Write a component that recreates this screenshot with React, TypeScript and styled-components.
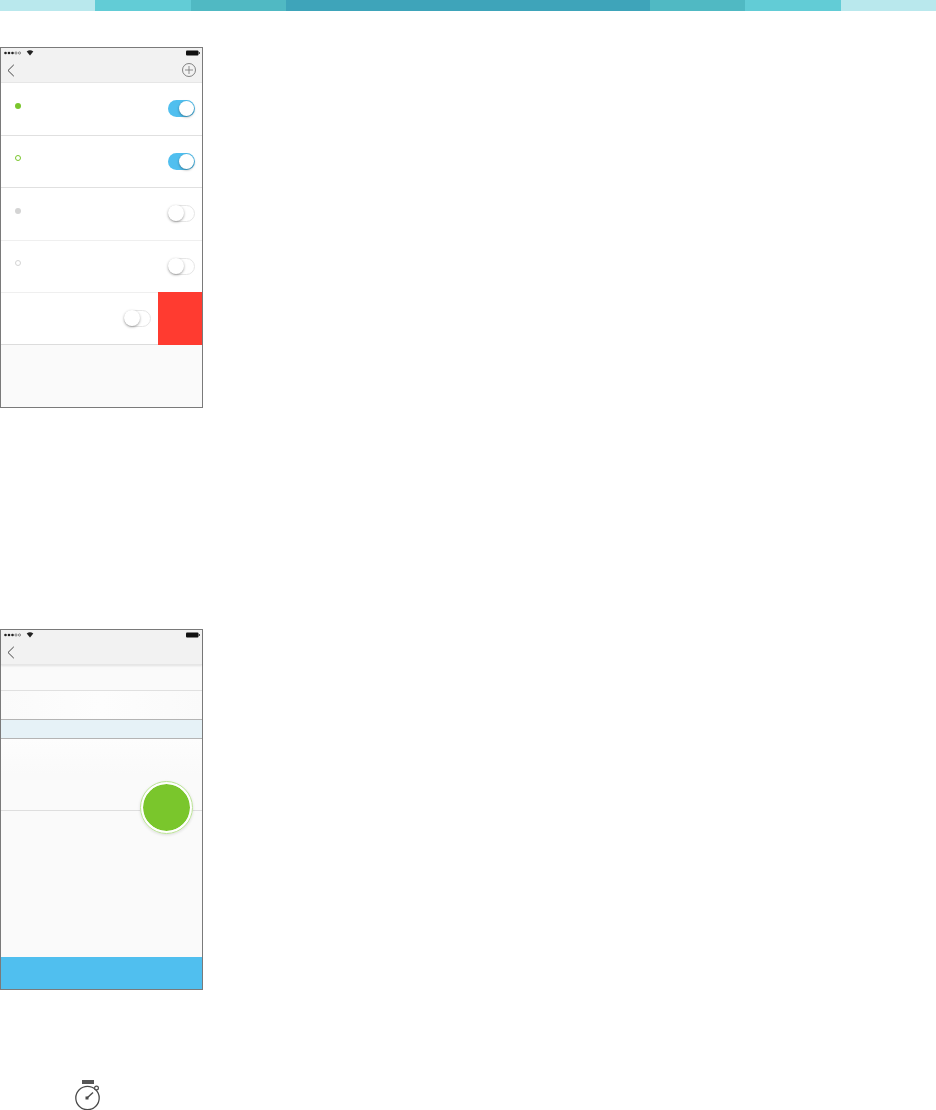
import { createGlobalStyle, styled } from "styled-components"

const GlobalStyle = createGlobalStyle`
  html, body {
    margin: 0;
    padding: 0;
    background: #fff;
    font-family: "Liberation Sans", Arial, sans-serif;
  }
  * {
    box-sizing: border-box;
  }
`

const stripes = [
  { width: 95, color: "#b9e8ed" },
  { width: 96, color: "#62ccd6" },
  { width: 95, color: "#50b9c3" },
  { width: 364, color: "#3ea4ba" },
  { width: 95, color: "#50b9c3" },
  { width: 96, color: "#62ccd6" },
  { width: 95, color: "#b9e8ed" },
]

const rows = [
  { hollow: false, color: "#7ac62c", on: true, line: "#e0e0e0" },
  { hollow: true, color: "#7ac62c", on: true, line: "#e0e0e0" },
  { hollow: false, color: "#d4d4d4", on: false, line: "#efefef" },
  { hollow: true, color: "#d4d4d4", on: false, line: "#efefef" },
]

const StatusIcons = () => (
  <StatusBar>
    <svg width="40" height="6" viewBox="0 0 40 6">
      <circle cx="5.5" cy="3" r="1.3" fill="#222" />
      <circle cx="9" cy="3" r="1.3" fill="#222" />
      <circle cx="12.5" cy="3" r="1.3" fill="#222" />
      <circle cx="16" cy="3" r="1.1" fill="none" stroke="#222" strokeWidth="0.5" />
      <circle cx="19.5" cy="3" r="1.1" fill="none" stroke="#222" strokeWidth="0.5" />
      <path d="M26.7 1.6a5.4 5.4 0 0 1 6.6 0L30 5.6z" fill="#222" />
    </svg>
    <svg width="14" height="6" viewBox="0 0 14 6">
      <rect x="0" y="0.5" width="12.5" height="5" rx="1" fill="#111" />
      <rect x="12.8" y="2" width="0.9" height="2" fill="#111" />
    </svg>
  </StatusBar>
)

const BackIcon = () => (
  <svg width="8" height="13" viewBox="0 0 8 13">
    <path d="M6.8 0.8 1 6.5l5.8 5.7" fill="none" stroke="#444" strokeWidth="1" />
  </svg>
)

const PlusIcon = () => (
  <svg width="14" height="14" viewBox="0 0 14 14">
    <circle cx="7" cy="7" r="6.5" fill="none" stroke="#666" strokeWidth="0.8" />
    <path d="M7 3v8M3 7h8" fill="none" stroke="#666" strokeWidth="0.7" />
  </svg>
)

const StopwatchIcon = () => (
  <svg width="28" height="31" viewBox="0 0 28 31">
    <rect x="8" y="0" width="12" height="4" fill="#555" />
    <circle cx="13.5" cy="18" r="11.7" fill="none" stroke="#4a4a4a" strokeWidth="1.3" />
    <circle cx="22.5" cy="8" r="1.9" fill="#fff" stroke="#4a4a4a" strokeWidth="1.2" />
    <path d="M13 18l6-5.5" stroke="#4a4a4a" strokeWidth="1.4" />
    <rect x="11.5" y="16.5" width="3" height="3" fill="#4a4a4a" />
  </svg>
)

const App = () => {
  return (
    <Page>
      <GlobalStyle />
      <Stripe>
        {stripes.map((s, i) => (
          <StripeBand key={i} $width={s.width} $color={s.color} />
        ))}
      </Stripe>

      <Phone>
        <Header>
          <StatusIcons />
          <NavBar>
            <BackIcon />
            <PlusIcon />
          </NavBar>
        </Header>
        {rows.map((r, i) => (
          <Row key={i} $line={r.line}>
            <Dot $hollow={r.hollow} $color={r.color} />
            <Toggle $on={r.on}>
              <Knob $on={r.on} />
            </Toggle>
          </Row>
        ))}
        <SwipedRow>
          <Toggle $on={false}>
            <Knob $on={false} />
          </Toggle>
          <DeleteAction />
        </SwipedRow>
      </Phone>

      <Phone $second>
        <Header $shadow>
          <StatusIcons />
          <NavBar>
            <BackIcon />
          </NavBar>
        </Header>
        <InfoRow />
        <InfoRow $tall />
        <SectionBand />
        <TimerRow>
          <ActionButton />
        </TimerRow>
        <FillArea />
        <BottomButton />
      </Phone>

      <IconSlot>
        <StopwatchIcon />
      </IconSlot>
    </Page>
  )
}

const Page = styled.div`
  width: 936px;
  height: 1110px;
  overflow: hidden;
  background: #fff;
`

const Stripe = styled.div`
  display: flex;
  height: 11px;
`

const StripeBand = styled.div<{ $width: number; $color: string }>`
  width: ${(p) => p.$width}px;
  background: ${(p) => p.$color};
`

const Phone = styled.div<{ $second?: boolean }>`
  width: 203px;
  height: 361px;
  margin-top: ${(p) => (p.$second ? "221px" : "36px")};
  border: 1px solid #7a7a7a;
  background: #fafafa;
  display: flex;
  flex-direction: column;
`

const Header = styled.div<{ $shadow?: boolean }>`
  height: 35px;
  flex-shrink: 0;
  background: #f2f2f2;
  border-bottom: 1px solid #e6e6e6;
  box-shadow: ${(p) => (p.$shadow ? "0 1px 2px rgba(0, 0, 0, 0.1)" : "none")};
  position: relative;
`

const StatusBar = styled.div`
  height: 9px;
  padding: 1px 2px 0 0;
  display: flex;
  justify-content: space-between;
  align-items: center;

  svg:first-child {
    margin-left: -1px;
  }
`

const NavBar = styled.div`
  height: 25px;
  padding: 1px 6px 0 6px;
  display: flex;
  justify-content: space-between;
  align-items: center;
`

const Row = styled.div<{ $line: string }>`
  height: 52.5px;
  flex-shrink: 0;
  background: #fff;
  border-bottom: 1px solid ${(p) => p.$line};
  padding: 17px 7px 0 14px;
  display: flex;
  justify-content: space-between;
  align-items: flex-start;
`

const Dot = styled.span<{ $hollow: boolean; $color: string }>`
  width: 6px;
  height: 6px;
  margin-top: 2.5px;
  border-radius: 50%;
  background: ${(p) => (p.$hollow ? "#fff" : p.$color)};
  border: ${(p) => (p.$hollow ? "1.5px" : "0")} solid ${(p) => p.$color};
`

const Toggle = styled.div<{ $on: boolean }>`
  width: 27px;
  height: 17px;
  border-radius: 9px;
  padding: 1px;
  display: flex;
  justify-content: ${(p) => (p.$on ? "flex-end" : "flex-start")};
  background: ${(p) => (p.$on ? "#50bfef" : "#fff")};
  border: ${(p) => (p.$on ? "0" : "1px solid #e6e6e6")};
`

const Knob = styled.div<{ $on: boolean }>`
  width: ${(p) => (p.$on ? "15px" : "16px")};
  height: ${(p) => (p.$on ? "15px" : "16px")};
  margin: ${(p) => (p.$on ? "0" : "-2px 0 0 -2px")};
  border-radius: 50%;
  background: #fff;
  box-shadow: 0 1px 2.5px rgba(0, 0, 0, 0.38);
  flex-shrink: 0;
`

const SwipedRow = styled.div`
  height: 52px;
  flex-shrink: 0;
  background: #fff;
  border-bottom: 1px solid #dcdcdc;
  display: flex;
  justify-content: flex-end;
  align-items: flex-start;
  padding-top: 17px;
  position: relative;

  ${Toggle} {
    margin-right: 51px;
  }
`

const DeleteAction = styled.div`
  position: absolute;
  top: -1px;
  right: 0;
  bottom: -1px;
  width: 44px;
  background: #ff3b30;
`

const InfoRow = styled.div<{ $tall?: boolean }>`
  height: ${(p) => (p.$tall ? "28px" : "26px")};
  flex-shrink: 0;
  border-bottom: ${(p) => (p.$tall ? "0" : "1px solid #e0e0e0")};
  background: ${(p) =>
    p.$tall ? "linear-gradient(90deg, #fafafa, #fdfdfd 50%, #fafafa)" : "#fafafa"};
`

const SectionBand = styled.div`
  height: 20px;
  flex-shrink: 0;
  background: #e6f2f7;
  border-top: 1px solid #b4b4b4;
  border-bottom: 1px solid #b4b4b4;
`

const TimerRow = styled.div`
  height: 72px;
  flex-shrink: 0;
  border-bottom: 1px solid #dedede;
  background: linear-gradient(180deg, #fdfdfd, #fafafa 50%);
  position: relative;
`

const ActionButton = styled.div`
  position: absolute;
  left: 139px;
  top: 42px;
  width: 53px;
  height: 53px;
  border-radius: 50%;
  background: #7ac62c;
  border: 3.5px solid #fff;
  outline: 1px solid #b9e293;
  outline-offset: -1px;
  box-shadow: 0 1px 3px rgba(0, 0, 0, 0.12);
  background-clip: padding-box;
`

const FillArea = styled.div`
  flex: 1;
`

const BottomButton = styled.div`
  height: 32px;
  flex-shrink: 0;
  background: #50bfef;
`

const IconSlot = styled.div`
  margin-top: 90px;
  padding-left: 74px;
  display: flex;
  height: 30px;
`

export default App
